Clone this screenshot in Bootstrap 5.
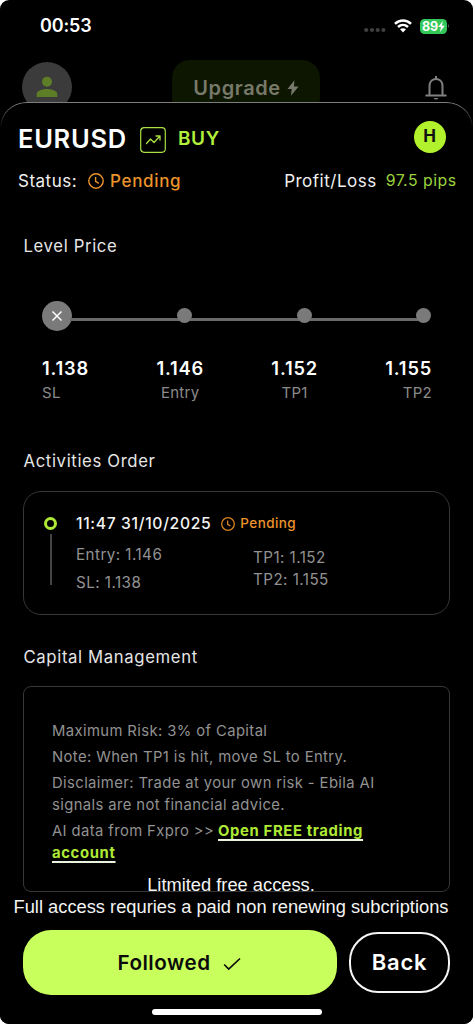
<!DOCTYPE html>
<html lang="en">
<head>
<meta charset="utf-8">
<meta name="viewport" content="width=device-width, initial-scale=1">
<title>EURUSD signal</title>
<link href="https://cdn.jsdelivr.net/npm/bootstrap@5.3.0/dist/css/bootstrap.min.css" rel="stylesheet">
<style>
  body { background: #fff; font-family: Inter, "Noto Sans", sans-serif; color: #f0f0f0; overflow: hidden; }
  svg { display: block; flex: none; }
  .phone { width: 473px; height: 1024px; background: #000; border-radius: 9px; overflow: hidden; }
  .statusbar { height: 52px; padding: 0 23px 0 40px; }
  .clock-time { font-size: 18px; font-weight: 600; letter-spacing: -.15px; color: #fff; line-height: 52px; }
  .battery { width: 27px; height: 15px; border-radius: 4.5px; background: #34c759; color: #fff; font-size: 12.5px; font-weight: 700; line-height: 15px; padding-left: 2px; letter-spacing: -.2px; }
  .backdrop-row { height: 50px; padding: 8px 22px 0; }
  .avatar { width: 50px; height: 50px; background: #3b3b3b; margin-top: 2px; }
  .upgrade { width: 148px; height: 56px; border-radius: 18px; background: #0d1600; color: #77796a; font-size: 20px; font-weight: 600; letter-spacing: .6px; margin-left: -1px; }
  .sheet { height: 922px; background: #000; border-radius: 26px 26px 0 0; padding: .5px 18px 0; }
  .sheet::before { content: ""; position: absolute; inset: 0 0 auto 0; height: 60px; border: 1.5px solid #808080; border-bottom: 0; border-radius: 26px 26px 0 0; -webkit-mask: linear-gradient(#000, transparent 26px); mask: linear-gradient(#000, transparent 26px); pointer-events: none; }
  .title-row { height: 73px; padding: 1px 9.5px 0 0; }
  .pair { font-size: 25.5px; font-weight: 600; letter-spacing: .7px; color: #fff; width: 122px; }
  .side { font-size: 19px; font-weight: 600; letter-spacing: .6px; color: #b3f03c; margin-left: 12px; }
  .initial { width: 32px; height: 32px; background: #b2f22d; color: #111; font-size: 17px; font-weight: 700; margin-top: -6px; }
  .state-row { height: 26px; font-size: 17px; margin-top: -8px; letter-spacing: .5px; line-height: 26px; }
  .pending { color: #ec942c; }
  .state-row .pending { font-weight: 500; letter-spacing: .65px; margin-left: 6px; }
  .pips { color: #9bd23f; font-size: 15.8px; }
  .heading { font-size: 16.7px; line-height: 22px; letter-spacing: .64px; padding-left: 5.5px; color: #e6e6e6; }
  .track { margin: 44px 23.5px 0 24px; height: 30px; }
  .knob { width: 15px; height: 15px; border-radius: 50%; background: #7a7a7a; flex: none; }
  .knob-lg { width: 30px; height: 30px; }
  .rail { height: 3px; background: #6c6969; margin: 8px -2px 0; flex: 1 1 0; }
  .levels { margin: 25px 23px 0 24px; }
  .level-num { font-size: 18.3px; font-weight: 600; letter-spacing: .8px; line-height: 24px; color: #fff; }
  .level-tag { font-size: 15px; letter-spacing: .3px; line-height: 24px; color: #8b8b8b; margin-top: 1px; }
  .panel { margin: 0 5px; border: 1px solid #373737; }
  .order { height: 124px; border-radius: 18px; padding: 19px 20px 0 20px; }
  .ring { width: 13px; height: 13px; border: 3px solid #aeea35; border-radius: 50%; }
  .stem { width: 2px; height: 51px; background: #454545; margin-top: 4px; }
  .muted { color: #929292; font-size: 15.2px; letter-spacing: .45px; }
  .stamp { font-size: 15.7px; font-weight: 500; letter-spacing: .65px; color: #f4f4f4; }
  .risk { height: 206px; border-radius: 8px; padding: 34px 28px 0; }
  .risk p { font-size: 14.8px; letter-spacing: .4px; line-height: 21.6px; margin: 0 0 4.8px; color: #929292; white-space: nowrap; }
  .risk a { color: #aeea35; font-weight: 700; letter-spacing: .66px; margin-left: -.7px; text-decoration: underline; text-decoration-color: #e9f3dc; text-underline-offset: 2.5px; text-decoration-thickness: 1.5px; text-decoration-skip-ink: none; }
  .foot { left: 0; bottom: 0; width: 473px; height: 150px; padding: 0 23px; z-index: 2; }
  .notice { font-family: "Liberation Sans", Arial, sans-serif; font-size: 18.3px; line-height: 22px; color: #f4f4f4; margin: 0 -14px 0 -25px; white-space: nowrap; }
  .follow { width: 314px; height: 65px; border-radius: 28px; background: #c9ff5c; color: #0b0b0b; font-size: 20.6px; font-weight: 600; letter-spacing: .5px; padding: 2px 14px 0 12px; }
  .back { width: 101px; height: 61px; border: 2px solid #f5f5f5; border-radius: 29px; background: #000; color: #fff; font-size: 22px; font-weight: 600; letter-spacing: .75px; }
  .homebar { width: 170px; height: 6px; border-radius: 3px; background: #fff; margin: 14px auto 0; }
</style>
</head>
<body>
<main class="phone position-relative">
  <div class="statusbar d-flex justify-content-between align-items-center">
    <span class="clock-time">00:53</span>
    <div class="d-flex align-items-center">
      <svg width="22" height="6" viewBox="0 0 22 6" fill="#3f3f3f" class="mt-2 me-2"><circle cx="2.200" cy="3" r="2.100"/><circle cx="8" cy="3" r="2.100"/><circle cx="13.700" cy="3" r="2.100"/><circle cx="19.400" cy="3" r="2.100"/></svg>
      <svg width="18" height="14" viewBox="0 0 18 14" fill="none" stroke="#fff" stroke-width="2.500" class="me-2"><path d="M1 4.800C5.600.3 12.400.3 17 4.800M4 8c3-2.800 7-2.800 10 0"/><path d="M6 10.300q3-2.300 6 0L9 13.600z" fill="#fff" stroke="none"/></svg>
      <div class="battery d-flex align-items-center">89<svg width="7" height="11" viewBox="0 0 7 11" fill="#fff"><path d="M4.800 0 .2 6h2.700L2 11l4.800-6.300H4z"/></svg></div>
      <svg width="3" height="6" viewBox="0 0 3 6"><path d="M1 1q2 2 0 4z" fill="#555"/></svg>
    </div>
  </div>
  <div class="backdrop-row d-flex justify-content-between align-items-start">
    <div class="avatar rounded-circle d-flex justify-content-center align-items-center">
      <svg width="22" height="22" viewBox="0 0 22 22" fill="#5d7e26"><circle cx="11" cy="5.800" r="5"/><path d="M.7 21v-3c0-3.200 6-5 10.300-5s10.300 1.800 10.300 5v3z"/></svg>
    </div>
    <div class="upgrade d-flex justify-content-center align-items-center">Upgrade
      <svg style="margin-left:6px" width="12" height="16" viewBox="0 0 12 16" fill="#77796a"><path d="M7.400.2.5 9h4.200L4 15.800 11.600 6.600H7z"/></svg>
    </div>
    <svg style="margin-top:14px" width="30" height="28" viewBox="0 0 30 28" fill="none" stroke="#818181" stroke-width="2"><path d="M15 2v3M8.500 21.500V12c0-9.500 13-9.500 13 0v9.500M4.500 21.500h21"/><path d="M12.500 24h5q-2.500 3-5 0z" fill="#818181" stroke="none"/></svg>
  </div>

  <section class="sheet position-relative">
    <div class="title-row d-flex align-items-center">
      <span class="pair">EURUSD</span>
      <svg width="26" height="26" viewBox="0 0 26 26" fill="none" stroke="#a9df42" stroke-linecap="round" stroke-linejoin="round"><rect x=".7" y=".7" width="24.600" height="24.600" rx="3.500" stroke-width="1.200"/><path d="m6.500 16.500 4-4.500 3.500 3.500 6-6.500m-4 0h4v4" stroke-width="1.300"/></svg>
      <span class="side">BUY</span>
      <span class="initial rounded-circle ms-auto d-flex align-items-center justify-content-center">H</span>
    </div>
    <div class="state-row d-flex align-items-center">
      <span>Status:</span>
      <svg style="margin-left:11px" width="16" height="16" viewBox="0 0 16 16" fill="none" stroke="#ec942c" stroke-width="1.400"><circle cx="8" cy="8" r="7.200"/><path d="M7.600 4v4.300l3.200 2"/></svg>
      <span class="pending">Pending</span>
      <span class="ms-auto">Profit/Loss</span>
      <span class="pips" style="margin:0 -1.500px 0 9px">97.5 pips</span>
    </div>

    <h2 class="heading fw-normal mb-0" style="margin-top:41px">Level Price</h2>
    <div class="track d-flex align-items-center">
      <div class="knob knob-lg d-flex align-items-center justify-content-center"><svg width="12" height="12" viewBox="0 0 12 12" stroke="#fff" stroke-width="1.500"><path d="m1.500 1.500 9 9m0-9-9 9"/></svg></div>
      <div class="rail"></div><div class="knob"></div>
      <div class="rail"></div><div class="knob"></div>
      <div class="rail"></div><div class="knob"></div>
    </div>
    <div class="levels d-flex justify-content-between">
      <div><div class="level-num">1.138</div><div class="level-tag">SL</div></div>
      <div class="text-center"><div class="level-num">1.146</div><div class="level-tag">Entry</div></div>
      <div class="text-center"><div class="level-num">1.152</div><div class="level-tag">TP1</div></div>
      <div class="text-end"><div class="level-num">1.155</div><div class="level-tag">TP2</div></div>
    </div>

    <h2 class="heading fw-normal mb-0" style="margin-top:45px">Activities Order</h2>
    <div class="panel order d-flex" style="margin-top:19px">
      <div class="d-flex flex-column align-items-center pt-1" style="margin-top:2px"><div class="ring"></div><div class="stem"></div></div>
      <div class="flex-grow-1" style="margin-left:19px">
        <div class="d-flex align-items-center" style="height:26px">
          <span class="stamp">11:47 31/10/2025</span>
          <svg style="margin-left:10px" width="14" height="14" viewBox="0 0 16 16" fill="none" stroke="#d98224" stroke-width="1.500"><circle cx="8" cy="8" r="7.200"/><path d="M7.600 4v4.300l3.200 2"/></svg>
          <span class="pending" style="font-size:13.500px;font-weight:500;letter-spacing:.4px;margin-left:5px">Pending</span>
        </div>
        <div class="d-flex muted">
          <div style="width:177px;line-height:28px;padding-top:4px">Entry: 1.146<br>SL: 1.138</div>
          <div style="line-height:22px;padding-top:10px">TP1: 1.152<br>TP2: 1.155</div>
        </div>
      </div>
    </div>

    <h2 class="heading fw-normal mb-0" style="margin-top:31px">Capital Management</h2>
    <div class="panel risk" style="margin-top:18px">
      <p>Maximum Risk: 3% of Capital</p>
      <p>Note: When TP1 is hit, move SL to Entry.</p>
      <p>Disclaimer: Trade at your own risk - Ebila AI<br>signals are not financial advice.</p>
      <p>AI data from Fxpro &gt;&gt; <a href="#">Open FREE trading<br>account</a></p>
    </div>
  </section>

  <footer class="foot position-absolute">
    <div class="notice text-center">Litmited free access.<br>Full access requries a paid non renewing subcriptions</div>
    <div class="d-flex justify-content-between align-items-center" style="margin-top:12px">
      <button class="follow btn d-flex align-items-center justify-content-center">Followed
        <svg style="margin-left:12px" width="18" height="14" viewBox="0 0 18 14" fill="none" stroke="#0b0b0b" stroke-width="1.700"><path d="m1.200 7.500 4.500 4.500L17 1.500"/></svg>
      </button>
      <button class="back btn p-0">Back</button>
    </div>
    <div class="homebar"></div>
  </footer>
</main>
<script src="https://cdn.jsdelivr.net/npm/bootstrap@5.3.0/dist/js/bootstrap.bundle.min.js"></script>
</body>
</html>
